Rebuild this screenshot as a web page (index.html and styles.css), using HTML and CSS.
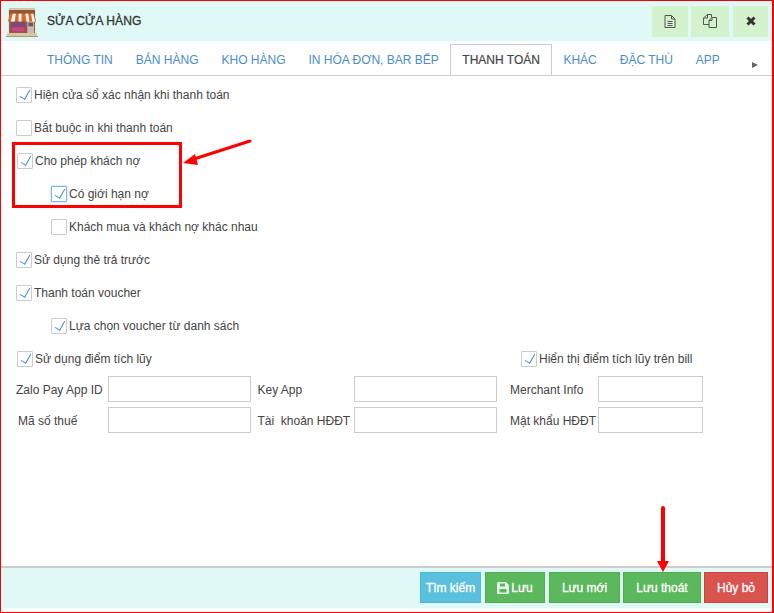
FILE: index.html
```html
<!DOCTYPE html>
<html lang="vi">
<head>
<meta charset="utf-8">
<title>Sửa cửa hàng</title>
<link rel="stylesheet" href="styles.css">
</head>
<body>
<div class="dialog">
  <header class="head">
    <svg class="logo" width="32" height="31" viewBox="0 0 33 32">
      <rect x="3" y="3" width="27" height="4" fill="#8a5a3a"/>
      <rect x="3" y="1" width="27" height="2" fill="#d9c4a8"/>
      <rect x="3" y="6" width="27" height="21" fill="#9c5a3c"/>
      <rect x="5" y="14" width="15" height="11" fill="#7d4a70"/>
      <rect x="6" y="21" width="13" height="4" fill="#d0408a"/>
      <rect x="22" y="14" width="7" height="13" fill="#cbb8b0"/>
      <rect x="23" y="16" width="5" height="4" fill="#6a5a70"/>
      <path d="M4 7h25l2 8H2z" fill="#e8641e"/>
      <path d="M7 7h3l-1 8H5zM13 7h3v8h-3zM20 7h3l1 8h-3zM26 7h2l2 8h-3z" fill="#fff"/>
      <rect x="1" y="27" width="31" height="3" fill="#d8c4a4"/>
      <rect x="0" y="30" width="33" height="1" fill="#a89474"/>
    </svg>
    <h1 class="title">SỬA CỬA HÀNG</h1>
    <div class="head-actions">
      <button class="hbtn hbtn-a" type="button">
        <svg width="12" height="13" viewBox="0 0 12 13" fill="none" stroke="#555" stroke-width="1"><path d="M1 .5h6.500l3.500 3.500v8.500H1zM7.500 .5V4H11M3.500 6.500h5M3.500 8.500h5M3.500 10.500h5"/></svg>
      </button>
      <button class="hbtn hbtn-b" type="button">
        <svg width="14" height="14" viewBox="0 0 14 14" fill="none" stroke="#555" stroke-width="1"><path d="M4.500 .5h4V3.500M4.500 .5L.5 4v6.500H6M4.500 .5V4H.5"/><path d="M9 3.500h4.500v10H6v-7zM9 3.500v3H6"/></svg>
      </button>
      <button class="hbtn hbtn-c" type="button">
        <svg width="10" height="10" viewBox="0 0 10 10" stroke="#333" stroke-width="3"><path d="M1.500 1.500l7 7M8.500 1.500l-7 7"/></svg>
      </button>
    </div>
  </header>

  <nav class="tabs">
    <a class="tab">THÔNG TIN</a>
    <a class="tab">BÁN HÀNG</a>
    <a class="tab">KHO HÀNG</a>
    <a class="tab">IN HÓA ĐƠN, BAR BẾP</a>
    <a class="tab active">THANH TOÁN</a>
    <a class="tab">KHÁC</a>
    <a class="tab">ĐẶC THÙ</a>
    <a class="tab">APP</a>
    <span class="tab-more"></span>
  </nav>

  <main class="body">
    <label class="check row"><span class="box on"></span><span>Hiện cửa sổ xác nhận khi thanh toán</span></label>
    <label class="check row"><span class="box"></span><span>Bắt buộc in khi thanh toán</span></label>
    <label class="check row nudge"><span class="box on"></span><span>Cho phép khách nợ</span></label>
    <label class="check row sub"><span class="box on focus"></span><span>Có giới hạn nợ</span></label>
    <label class="check row sub"><span class="box"></span><span>Khách mua và khách nợ khác nhau</span></label>
    <label class="check row"><span class="box on"></span><span>Sử dụng thẻ trả trước</span></label>
    <label class="check row"><span class="box on"></span><span>Thanh toán voucher</span></label>
    <label class="check row sub"><span class="box on"></span><span>Lựa chọn voucher từ danh sách</span></label>
    <div class="row split">
      <label class="check nudge"><span class="box on"></span><span>Sử dụng điểm tích lũy</span></label>
      <label class="check right"><span class="box on"></span><span>Hiển thị điểm tích lũy trên bill</span></label>
    </div>
    <div class="fields">
      <span class="lab">Zalo Pay App ID</span><input class="inp" type="text">
      <span class="lab l2">Key App</span><input class="inp" type="text">
      <span class="lab l3">Merchant Info</span><input class="inp" type="text">
      <span class="lab ind">Mã số thuế</span><input class="inp" type="text">
      <span class="lab l2">Tài&nbsp; khoản HĐĐT</span><input class="inp" type="text">
      <span class="lab l3">Mật khẩu HĐĐT</span><input class="inp" type="text">
    </div>
  </main>

  <footer class="foot">
    <button class="btn info" type="button">Tìm kiếm</button>
    <button class="btn ok b-save" type="button">
      <svg width="12" height="12" viewBox="0 0 12 12"><path fill-rule="evenodd" fill="#e8f5e8" d="M1 0h8l3 3v8a1 1 0 0 1-1 1H1a1 1 0 0 1-1-1V1a1 1 0 0 1 1-1zM3 1.500v3h5v-3zM2.500 7v3.500h7V7z"/></svg>
      Lưu</button>
    <button class="btn ok b-new" type="button">Lưu mới</button>
    <button class="btn ok b-exit" type="button">Lưu thoát</button>
    <button class="btn danger" type="button">Hủy bỏ</button>
  </footer>

  <div class="mark-box"></div>
  <svg class="mark-arrows" width="774" height="613" viewBox="0 0 774 613">
    <path d="M250 141L194 159" stroke="#f00" stroke-width="3" stroke-linecap="round" fill="none"/>
    <path d="M183 163l12-9 3 11z" fill="#f00"/>
    <path d="M663 508v56" stroke="#f00" stroke-width="4" stroke-linecap="round" fill="none"/>
    <path d="M657 561h12l-6 11z" fill="#f00"/>
  </svg>
</div>
</body>
</html>
```
FILE: styles.css
```css
* { box-sizing: border-box; }
html, body { margin: 0; padding: 0; }
body { width: 774px; height: 613px; overflow: hidden; background: #fff; font-family: "Liberation Sans", Arial, sans-serif; font-size: 12px; color: #333; }
.dialog { position: relative; width: 774px; height: 613px; border: 1px solid #f00; border-right-width: 2px; display: flex; flex-direction: column; background: #fff; }
.head { height: 40px; flex: none; background: #e0f9f6; display: flex; align-items: center; padding: 0 4px 0 5px; }
.logo { flex: none; margin-top: 3px; }
.title { margin: 0 0 0 9px; font-size: 12px; font-weight: normal; color: #333; -webkit-text-stroke: 0.3px #333; letter-spacing: 0.1px; }
.head-actions { margin-left: auto; display: flex; align-items: center; gap: 3px; }
.hbtn { height: 31px; padding: 0; border: 0; background: #d5f2cf; display: flex; align-items: center; justify-content: center; }
.hbtn-a { width: 36px; }
.hbtn-b { width: 38px; }
.hbtn-c { width: 35px; margin-left: 1px; }
.tabs { height: 35px; flex: none; display: flex; align-items: flex-start; padding-left: 34.500px; border-bottom: 1px solid #ccc; position: relative; }
.tab { display: flex; align-items: center; justify-content: center; height: 31px; margin-top: 3px; padding: 0 10.500px; border: 1px solid transparent; border-bottom: 0; color: #4a8ccb; font-size: 12px; white-space: nowrap; }
.tab.active { padding: 0 11px; color: #444; -webkit-text-stroke: 0.2px #444; border-color: #ccc; }
.tab-more { position: absolute; right: 14px; top: 21px; width: 0; height: 0; border-left: 6px solid #666; border-top: 3.500px solid transparent; border-bottom: 3.500px solid transparent; }
.body { flex: 1; padding: 11px 0 0 15px; }
.row { height: 33px; }
.check { display: flex; align-items: flex-start; font-size: 12px; line-height: 17px; color: #444; }
.check > span:last-child { margin-left: 2px; }
.nudge { margin-left: 1px; }
.box { flex: none; width: 16px; height: 16px; border: 1px solid #ccc; background: #fff; position: relative; border-radius: 1px; }
.box.on::after { content: ""; position: absolute; left: 4.500px; top: 0; width: 5px; height: 10px; border: solid #3f8fdc; border-width: 0 1.300px 1.300px 0; transform: rotate(29deg); }
.box.focus { border-color: #80b4e6; box-shadow: 0 0 2px #80b4e6; }
.sub { padding-left: 35px; }
.split { display: flex; }
.right { position: absolute; left: 520px; }
.fields { display: grid; grid-template-columns: 92px 143px 103px 143px 101px 105px; grid-auto-rows: 26px; row-gap: 5px; margin-top: -8px; align-items: center; }
.lab { font-size: 12px; color: #444; white-space: nowrap; padding-top: 2px; }
.ind { padding-left: 2px; }
.l2 { margin-left: 6.500px; }
.l3 { margin-left: 13px; }
.inp { height: 26px; border: 1px solid #ccc; background: #fff; padding: 0; width: 100%; }
.foot { height: 42px; flex: none; margin-bottom: 4px; background: #e0f9f6; border-top: 2px solid #ccc; display: flex; align-items: flex-start; justify-content: flex-end; gap: 4px; padding: 4px 4px 0 0; }
.btn { height: 31px; border: 1px solid; color: #fff; font-family: inherit; font-size: 12px; -webkit-text-stroke: 0.3px #fff; padding: 0; display: flex; align-items: center; justify-content: center; gap: 2px; }
.info { width: 61px; background: #5bc0de; border-color: #46b8da; }
.ok { background: #5cb85c; border-color: #4cae4c; }
.b-save { width: 60px; }
.b-new { width: 71px; }
.b-exit { width: 78px; margin-left: -1px; }
.danger { width: 64px; margin-left: -1px; background: #d9534f; border-color: #d43f3a; }
.mark-box { position: absolute; left: 11px; top: 141px; width: 170px; height: 66px; border: 3px solid #f00; pointer-events: none; }
.mark-arrows { position: absolute; left: -1px; top: -1px; pointer-events: none; }
```
